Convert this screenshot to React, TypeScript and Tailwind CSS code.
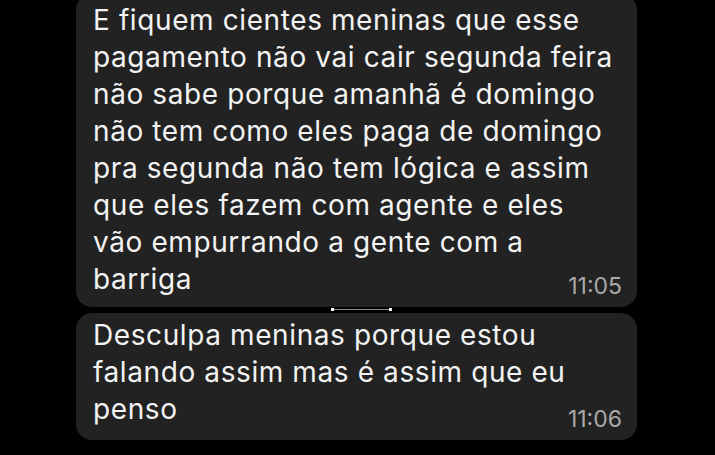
import React from "react";

const first = [
  "E fiquem cientes meninas que esse",
  "pagamento não vai cair segunda feira",
  "não sabe porque amanhã é domingo",
  "não tem como eles paga de domingo",
  "pra segunda não tem lógica e assim",
  "que eles fazem com agente e eles",
  "vão empurrando a gente com a",
  "barriga",
];

const second = [
  "Desculpa meninas porque estou",
  "falando assim mas é assim que eu",
  "penso",
];

const Bubble = ({
  lines,
  time,
  className,
  timeClass,
}: {
  lines: string[];
  time: string;
  className: string;
  timeClass: string;
}) => (
  <div className={"w-[561px] rounded-[16px] bg-[#222222] pl-[17px] pr-[15px] " + className}>
    <div className="text-[28px] leading-[37px] tracking-[0.6px] text-[#f3f3f3]">
      {lines.map((l) => (
        <div key={l} className="whitespace-nowrap">
          {l}
        </div>
      ))}
    </div>
    <div className={"flex justify-end text-[23px] leading-[28px] text-[#a9a9a9] " + timeClass}>{time}</div>
  </div>
);

export default function App() {
  return (
    <div
      className="relative h-[455px] w-[715px] overflow-hidden bg-black pl-[76px]"
      style={{ fontFamily: "Inter, 'Noto Sans', sans-serif" }}
    >
      <Bubble lines={first} time="11:05" className="-mt-[6px] pt-[8px] pb-[7px]" timeClass="-mt-[26px]" />
      <Bubble lines={second} time="11:06" className="mt-[6px] pt-[4px] pb-[7px]" timeClass="-mt-[23px]" />
      {/* selection handle left over in the screenshot */}
      <div className="absolute left-[331px] top-[308px] flex w-[61px] items-center">
        <div className="h-[3px] w-[3px] bg-white" />
        <div className="h-px flex-1 bg-[#8a8a8a]" />
        <div className="h-[3px] w-[3px] bg-white" />
      </div>
    </div>
  );
}
